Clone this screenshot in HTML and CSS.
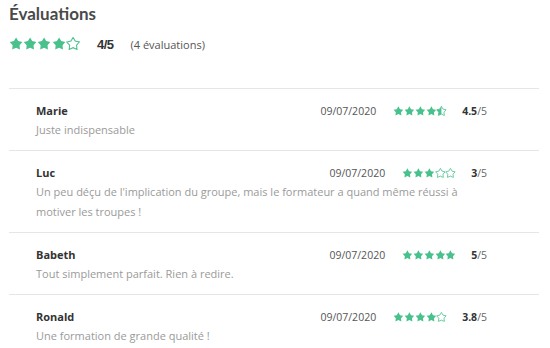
FILE: index.html
```html
<!DOCTYPE html>
<html lang="fr">
<head>
    <meta charset="UTF-8">
    <meta name="viewport" content="width=device-width, initial-scale=1.0">
    <title>Évaluations</title>
    <link rel="stylesheet" href="styles.css">
</head>
<body>

    <!-- star shapes, reused below -->
    <svg class="defs" xmlns="http://www.w3.org/2000/svg">
        <symbol id="star-full" viewBox="-0.7 -0.7 21.4 20">
            <path d="M10 0L13.23 5.55L19.51 6.91L15.23 11.7L15.88 18.09L10 15.5L4.12 18.09L4.77 11.7L0.49 6.91L6.77 5.55Z"/>
        </symbol>
        <symbol id="star-half" viewBox="-0.7 -0.7 21.4 20">
            <path class="star-line" d="M10 0L13.23 5.55L19.51 6.91L15.23 11.7L15.88 18.09L10 15.5L4.12 18.09L4.77 11.7L0.49 6.91L6.77 5.55Z"/>
            <path d="M10 0L6.77 5.55L0.49 6.91L4.77 11.7L4.12 18.09L10 15.5Z"/>
        </symbol>
        <symbol id="star-empty" viewBox="-0.7 -0.7 21.4 20">
            <path class="star-line" d="M10 0L13.23 5.55L19.51 6.91L15.23 11.7L15.88 18.09L10 15.5L4.12 18.09L4.77 11.7L0.49 6.91L6.77 5.55Z"/>
        </symbol>
    </svg>

    <div class="reviews">
        <h2 class="reviews-title">Évaluations</h2>

        <div class="summary">
            <span class="stars stars-big">
                <svg><use href="#star-full"/></svg><svg><use href="#star-full"/></svg><svg><use href="#star-full"/></svg><svg><use href="#star-full"/></svg><svg><use href="#star-empty"/></svg>
            </span>
            <span class="summary-score">4/5</span>
            <span class="summary-count">(4 évaluations)</span>
        </div>

        <ul class="review-list">
            <li class="review">
                <div class="review-name">Marie</div>
                <div class="review-meta">
                    <span class="review-date">09/07/2020</span>
                    <span class="stars">
                        <svg><use href="#star-full"/></svg><svg><use href="#star-full"/></svg><svg><use href="#star-full"/></svg><svg><use href="#star-full"/></svg><svg><use href="#star-half"/></svg>
                    </span>
                    <span class="review-score"><b>4.5</b>/5</span>
                </div>
                <p class="review-text">Juste indispensable</p>
            </li>
            <li class="review">
                <div class="review-name">Luc</div>
                <div class="review-meta">
                    <span class="review-date">09/07/2020</span>
                    <span class="stars">
                        <svg><use href="#star-full"/></svg><svg><use href="#star-full"/></svg><svg><use href="#star-full"/></svg><svg><use href="#star-empty"/></svg><svg><use href="#star-empty"/></svg>
                    </span>
                    <span class="review-score"><b>3</b>/5</span>
                </div>
                <p class="review-text">Un peu déçu de l'implication du groupe, mais le formateur a quand même réussi à motiver les troupes !</p>
            </li>
            <li class="review">
                <div class="review-name">Babeth</div>
                <div class="review-meta">
                    <span class="review-date">09/07/2020</span>
                    <span class="stars">
                        <svg><use href="#star-full"/></svg><svg><use href="#star-full"/></svg><svg><use href="#star-full"/></svg><svg><use href="#star-full"/></svg><svg><use href="#star-full"/></svg>
                    </span>
                    <span class="review-score"><b>5</b>/5</span>
                </div>
                <p class="review-text">Tout simplement parfait. Rien à redire.</p>
            </li>
            <li class="review">
                <div class="review-name">Ronald</div>
                <div class="review-meta">
                    <span class="review-date">09/07/2020</span>
                    <span class="stars">
                        <svg><use href="#star-full"/></svg><svg><use href="#star-full"/></svg><svg><use href="#star-full"/></svg><svg><use href="#star-full"/></svg><svg><use href="#star-empty"/></svg>
                    </span>
                    <span class="review-score"><b>3.8</b>/5</span>
                </div>
                <p class="review-text">Une formation de grande qualité !</p>
            </li>
        </ul>
    </div>

</body>
</html>
```

FILE: styles.css
```css
body {
    font-family: "Open Sans", Arial, sans-serif;
    margin: 0;
    padding: 0;
    background-color: #fff;
    color: #444;
}

.defs {
    display: none;
}

.reviews {
    padding: 3px 11px 0 9px;
}

.reviews-title {
    font-family: Lato, "Open Sans", sans-serif;
    font-size: 17px;
    font-weight: 700;
    line-height: 22px;
    color: #4a4a4a;
    margin: 0;
}

.summary {
    display: flex;
    align-items: center;
    height: 20px;
    margin-top: 9px;
}

.stars {
    display: inline-flex;
    fill: #49c18d;
}

.stars svg {
    width: 10.8px;
    height: 10px;
}

.stars-big svg {
    width: 14.2px;
    height: 13.2px;
}

.star-line {
    fill: none;
    stroke: #49c18d;
    stroke-width: 1.6;
}

.summary-score {
    font-family: "Liberation Sans", Arial, sans-serif;
    font-weight: 700;
    font-size: 13px;
    letter-spacing: -0.5px;
    color: #333;
    margin-left: 17px;
}

.summary-count {
    font-size: 11px;
    color: #555;
    margin-left: 17px;
}

.review-list {
    list-style: none;
    margin: 34px 0 0;
    padding: 0;
}

.review {
    display: grid;
    grid-template-columns: 1fr auto;
    border-top: 1px solid #e6e6e6;
    padding: 13px 52px 10px 27px;
}

.review-name {
    font-size: 11px;
    font-weight: 700;
    line-height: 18px;
    color: #333;
}

.review-meta {
    display: flex;
    align-items: center;
    height: 18px;
}

.review-text {
    grid-column: 1 / -1;
    font-size: 11px;
    line-height: 20px;
    color: #9a9a9a;
    margin: 0;
}

.review-date {
    font-size: 10.5px;
    color: #555;
    margin-right: 17px;
}

.review-score {
    font-size: 10.5px;
    color: #666;
    margin-left: 15px;
}

.review-score b {
    color: #333;
}
```
